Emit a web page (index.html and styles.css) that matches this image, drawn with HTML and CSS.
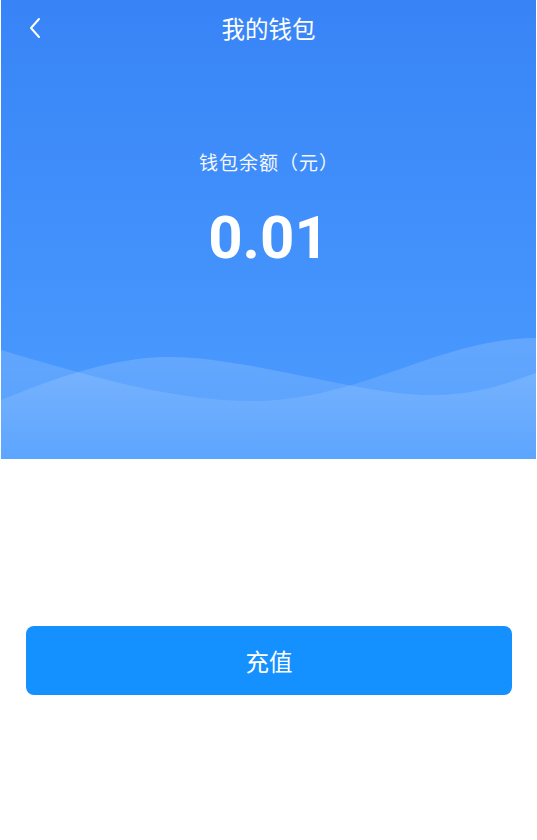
FILE: index.html
```html
<!DOCTYPE html>
<html lang="zh-CN">

<head>
    <meta charset="UTF-8">
    <title>我的钱包</title>
    <link rel="stylesheet" href="styles.css">
</head>

<body>
    <div class="wallet-head">
        <div class="nav-bar">
            <span class="nav-back">
                <svg width="14" height="22" viewBox="0 0 14 22">
                    <path d="M11 2 L3 11 L11 20" fill="none" stroke="#fff" stroke-width="2" stroke-linecap="round" stroke-linejoin="round"/>
                </svg>
            </span>
            <span class="nav-title">我的钱包</span>
        </div>
        <div class="balance-label">钱包余额（元）</div>
        <div class="balance-amount">0.01</div>
        <svg class="waves" viewBox="0 0 535 129" preserveAspectRatio="none">
            <defs>
                <linearGradient id="fade" x1="0" y1="0" x2="0" y2="1">
                    <stop offset="0" stop-color="#fff" stop-opacity="0.16"/>
                    <stop offset="1" stop-color="#fff" stop-opacity="0.05"/>
                </linearGradient>
            </defs>
            <path d="M0 20 C100 50 180 72 255 71 C360 70 440 8 535 8 V129 H0 Z" fill="url(#fade)"/>
            <path d="M0 70 C50 50 110 27 167 27 C250 27 360 66 433 65 C480 64 510 52 535 43 V129 H0 Z" fill="url(#fade)"/>
        </svg>
    </div>

    <div class="actions">
        <button class="btn-recharge">充值</button>
    </div>
</body>

</html>
```

FILE: styles.css
```css
body {
    margin: 0;
    background: #fff;
    font-family: "Noto Sans CJK SC", "Noto Sans", sans-serif;
}

.wallet-head {
    margin-left: 1px;
    width: 535px;
    height: 459px;
    background: linear-gradient(#3884f7, #4b9cff);
    display: flex;
    flex-direction: column;
    align-items: center;
    color: #fff;
}

.nav-bar {
    position: relative;
    width: 100%;
    height: 58px;
    display: flex;
    align-items: center;
    justify-content: center;
}

.nav-back {
    position: absolute;
    left: 27px;
    top: 17px;
    display: flex;
}

.nav-title {
    font-size: 23.5px;
    line-height: 30px;
    margin-bottom: 3px;
}

.balance-label {
    margin-top: 92px;
    font-size: 19px;
    line-height: 24px;
    letter-spacing: 1px;
    margin-right: -1px;
    opacity: 0.95;
}

.balance-amount {
    margin-top: 29px;
    font-family: Roboto, "Liberation Sans", sans-serif;
    font-weight: bold;
    font-size: 60px;
    line-height: 70px;
}

.waves {
    display: block;
    margin-top: auto;
    width: 535px;
    height: 129px;
}

.actions {
    padding: 167px 25px 0 26px;
}

.btn-recharge {
    display: block;
    width: 486px;
    height: 69px;
    border: none;
    border-radius: 8px;
    background: #1590ff;
    color: #fff;
    font-family: inherit;
    font-size: 23.5px;
}
```
